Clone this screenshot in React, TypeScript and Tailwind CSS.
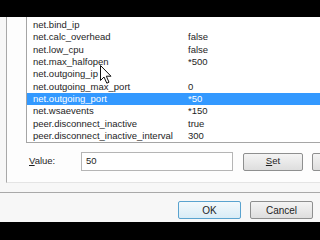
const rows: [string, string][] = [
  ["net.bind_ip", ""],
  ["net.calc_overhead", "false"],
  ["net.low_cpu", "false"],
  ["net.max_halfopen", "*500"],
  ["net.outgoing_ip", ""],
  ["net.outgoing_max_port", "0"],
  ["net.outgoing_port", "*50"],
  ["net.wsaevents", "*150"],
  ["peer.disconnect_inactive", "true"],
  ["peer.disconnect_inactive_interval", "300"],
];

const font = { fontFamily: '"Liberation Sans", Arial, sans-serif' };

const Cursor = () => (
  <svg
    className="absolute left-[100px] top-[65px]"
    width="13"
    height="20"
    viewBox="0 0 13 20"
  >
    <path
      d="M0.5 0.5 L0.5 15.5 L4 12 L6.8 18.2 L9 17.2 L6.3 11.2 L11 11.2 Z"
      fill="#fff"
      stroke="#111"
      strokeWidth="1"
      strokeLinejoin="miter"
    />
  </svg>
);

export default function App() {
  return (
    <div
      className="relative w-[320px] h-[240px] overflow-hidden bg-black flex flex-col text-[9.5px] text-[#1e1e1e]"
      style={font}
    >
      <div className="h-[17px] shrink-0 bg-black" />
      <div className="h-[205px] shrink-0 bg-[#f7f7f7] flex flex-col">
        {/* tab page */}
        <div className="h-[175px] shrink-0 flex">
          <div className="w-[6px] shrink-0" />
          <div className="h-[166px] w-[400px] shrink-0 border-l border-[#a8a8a8] border-b border-b-[#e4e4e4] bg-[#fdfdfd] pl-[19px] flex flex-col">
            <div className="h-[126px] w-[340px] shrink-0 bg-white border-l border-b border-[#a5a5a5] pt-[2px] overflow-hidden">
              {rows.map(([name, value], i) => (
                <div
                  key={name}
                  className={
                    i === 6
                      ? "h-[12.33px] flex items-center bg-[#3399ff] text-white"
                      : "h-[12.33px] flex items-center"
                  }
                >
                  <span className="w-[161px] shrink-0 pl-[6px] whitespace-nowrap">
                    {name}
                  </span>
                  <span className="whitespace-nowrap">{value}</span>
                </div>
              ))}
            </div>
            <div className="mt-[9px] h-[19px] flex items-center">
              <span className="w-[55px] shrink-0 pl-[3px]">
                <span className="underline">V</span>alue:
              </span>
              <div className="w-[152px] h-[19px] shrink-0 border border-[#b5b5b5] bg-white flex items-center pl-[4px]">
                50
              </div>
              <button className="ml-[10px] w-[60px] h-[18px] shrink-0 rounded-[2px] border border-[#8e8f8f] bg-gradient-to-b from-[#f4f4f4] to-[#dedede] flex items-center justify-center">
                <span className="underline">S</span>et
              </button>
              <button className="ml-[9px] w-[60px] h-[18px] shrink-0 rounded-[2px] border border-[#8e8f8f] bg-gradient-to-b from-[#f4f4f4] to-[#dedede]" />
            </div>
          </div>
        </div>
        <div className="border-t border-[#a9a9a9] pt-[8px] flex">
          <button className="ml-[178px] w-[63px] h-[18px] shrink-0 rounded-[2px] border border-[#5aa3cf] bg-gradient-to-b from-[#f3f9fc] to-[#d9ecf6] flex items-center justify-center text-[10px]">
            OK
          </button>
          <button className="ml-[9px] w-[63px] h-[18px] shrink-0 rounded-[2px] border border-[#8e8f8f] bg-gradient-to-b from-[#f4f4f4] to-[#dedede] flex items-center justify-center text-[10px]">
            Cancel
          </button>
        </div>
      </div>
      <div className="flex-1 bg-black" />
      <Cursor />
    </div>
  );
}
